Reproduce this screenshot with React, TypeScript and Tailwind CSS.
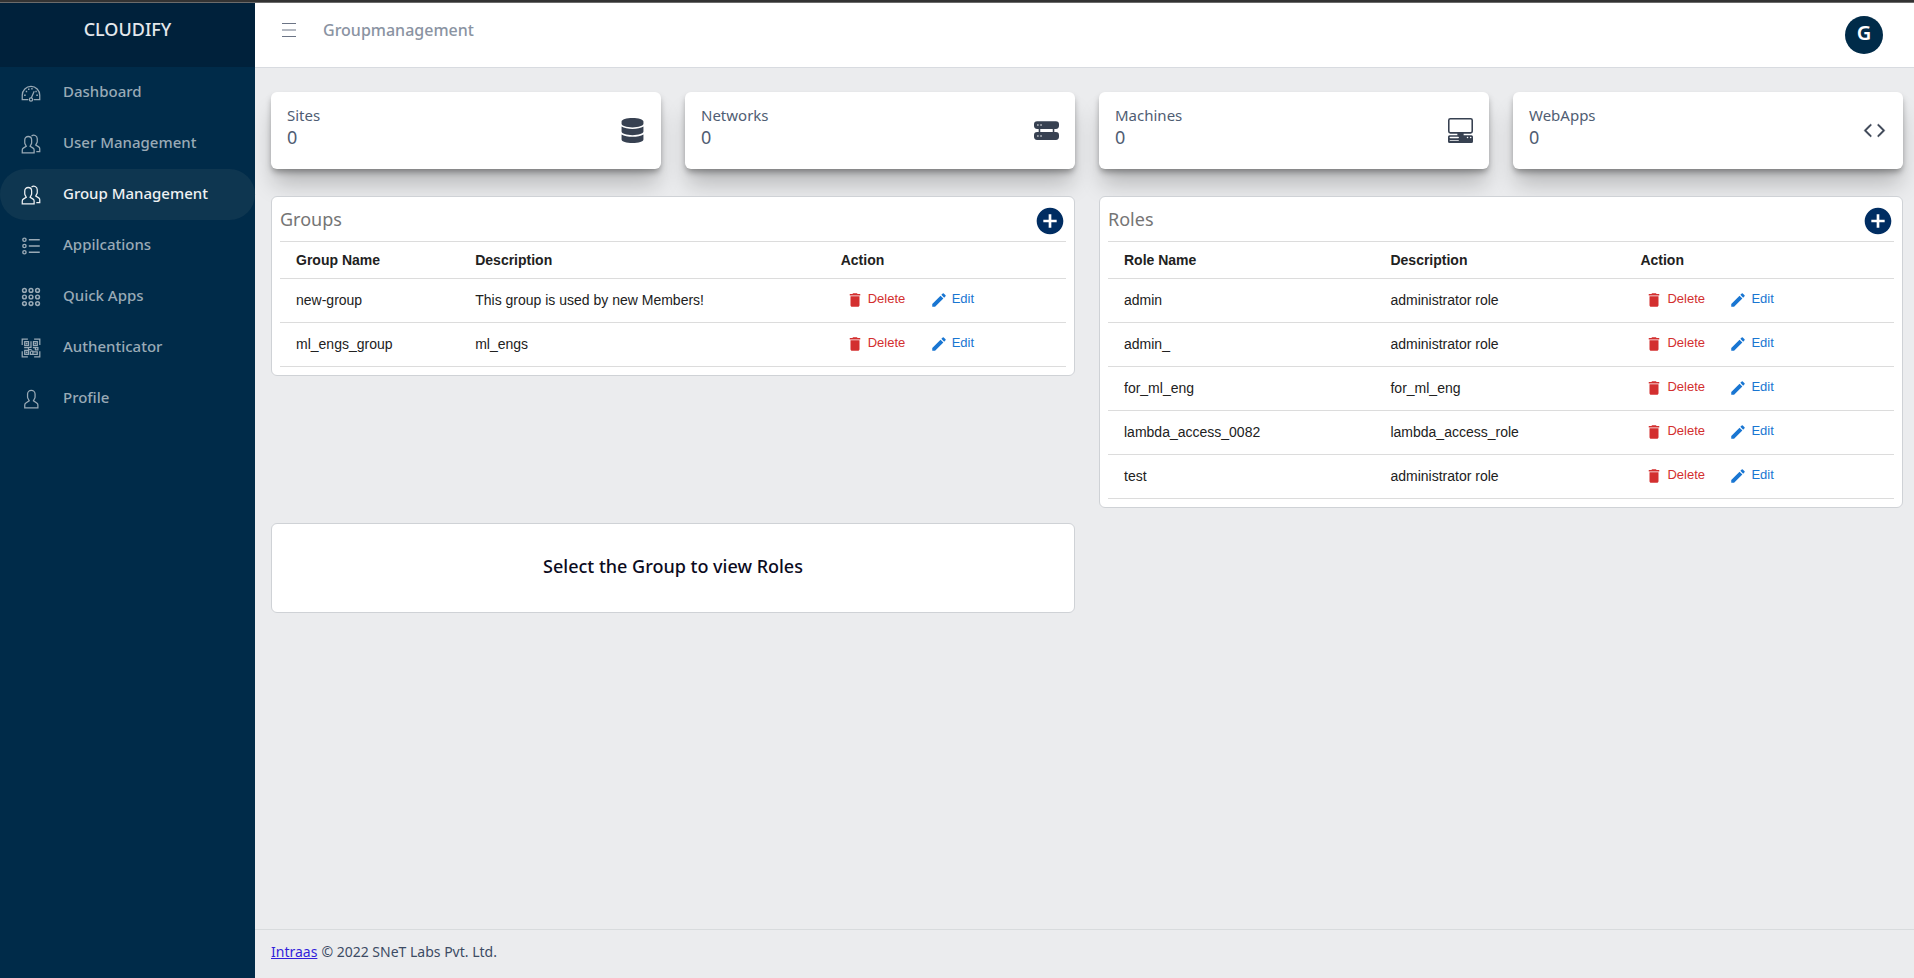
import type { ReactNode } from "react";
import { BsCode, BsHddRackFill, BsPcDisplayHorizontal } from "react-icons/bs";
import { FaDatabase } from "react-icons/fa";
import { MdAddCircle, MdDelete, MdEdit } from "react-icons/md";

function Icon({ children }: { children: ReactNode }) {
  return (
    <svg viewBox="0 0 512 512" className="size-5 shrink-0" fill="currentColor" aria-hidden="true">
      {children}
    </svg>
  );
}

function SpeedometerIcon() {
  return (
    <Icon>
      <path
        d="M186 425H32V312a224 224 0 0 1 448 0v113H326"
        fill="none"
        stroke="currentColor"
        strokeWidth="32"
      />
      <circle cx="256" cy="425" r="42" fill="none" stroke="currentColor" strokeWidth="32" />
      <path d="M262 386 338 214" stroke="currentColor" strokeWidth="32" />
      <path d="M80 296h40v34H80zM392 296h40v34h-40zM122 200h36v36h-36zM180 142h36v36h-36zM262 128h36v36h-36zM368 200h36v36h-36z" />
    </Icon>
  );
}

function PeopleIcon() {
  return (
    <Icon>
      <path d="M462.541,316.3l-64.344-42.1,24.774-45.418A79.124,79.124,0,0,0,432.093,192V120A103.941,103.941,0,0,0,257.484,43.523L279.232,67a71.989,71.989,0,0,1,120.861,53v72a46.809,46.809,0,0,1-5.215,21.452L355.962,284.8l89.058,58.274a42.16,42.16,0,0,1,19.073,35.421V432h-72v32h104V378.494A74.061,74.061,0,0,0,462.541,316.3Z" />
      <path d="M318.541,348.3l-64.343-42.1,24.773-45.418A79.124,79.124,0,0,0,288.093,224V152A104.212,104.212,0,0,0,184.04,47.866C126.723,47.866,80.093,94.581,80.093,152v72a78,78,0,0,0,9.015,36.775l24.908,45.664L50.047,348.3A74.022,74.022,0,0,0,16.5,410.4L16,496H352.093V410.494A74.061,74.061,0,0,0,318.541,348.3ZM320.093,464H48.186l.31-53.506a42.158,42.158,0,0,1,19.073-35.421l88.682-58.029L117.2,245.452A46.838,46.838,0,0,1,112.093,224V152a72,72,0,1,1,144,0v72a46.809,46.809,0,0,1-5.215,21.452L211.962,316.8l89.058,58.274a42.16,42.16,0,0,1,19.073,35.421Z" />
    </Icon>
  );
}

function ListIcon() {
  return (
    <Icon>
      <g fill="none" stroke="currentColor" strokeWidth="36">
        <circle cx="88" cy="96" r="42" />
        <circle cx="88" cy="256" r="42" />
        <circle cx="88" cy="416" r="42" />
        <path d="M200 96h280M200 256h280M200 416h280" />
      </g>
    </Icon>
  );
}

const DOTS = [88, 256, 424];

function AppsIcon() {
  return (
    <Icon>
      <g fill="none" stroke="currentColor" strokeWidth="38">
        {DOTS.map((y) => DOTS.map((x) => <circle key={`${x}-${y}`} cx={x} cy={y} r="48" />))}
      </g>
    </Icon>
  );
}

function QrCodeIcon() {
  return (
    <Icon>
      <g fill="none" stroke="currentColor" strokeWidth="32">
        <path d="M31 176V31h145M336 31h145v145M31 336v145h145M336 481h145V336" />
        <path d="M95 95h98v98H95zM319 95h98v98h-98zM95 319h98v98H95z" />
        <path d="M256 80v160h-48M80 248h112v48h80M304 248h128v56h-64v-40M240 336v80h176v-64h-96M256 336h48v80" />
      </g>
      <path d="M120 120h48v48h-48zM344 120h48v48h-48zM120 344h48v48h-48z" />
    </Icon>
  );
}

function UserIcon() {
  return (
    <Icon>
      <path d="M411.6,343.656l-72.823-47.334,27.455-50.334A80.23,80.23,0,0,0,376,207.681V128a112,112,0,0,0-224,0v79.681a80.236,80.236,0,0,0,9.768,38.308l27.455,50.333L116.4,343.656A79.725,79.725,0,0,0,80,410.732V496H448V410.732A79.727,79.727,0,0,0,411.6,343.656ZM416,464H112V410.732a47.836,47.836,0,0,1,21.841-40.246l97.66-63.479-41.64-76.341A48.146,48.146,0,0,1,184,207.681V128a80,80,0,0,1,160,0v79.681a48.146,48.146,0,0,1-5.861,22.985L296.5,307.007l97.662,63.479h0A47.836,47.836,0,0,1,416,410.732Z" />
    </Icon>
  );
}

const NAV = [
  { label: "Dashboard", icon: <SpeedometerIcon /> },
  { label: "User Management", icon: <PeopleIcon /> },
  { label: "Group Management", icon: <PeopleIcon />, active: true },
  { label: "Appilcations", icon: <ListIcon /> },
  { label: "Quick Apps", icon: <AppsIcon /> },
  { label: "Authenticator", icon: <QrCodeIcon /> },
  { label: "Profile", icon: <UserIcon /> },
];

const STATS = [
  { label: "Sites", value: 0, icon: <FaDatabase size={25} /> },
  { label: "Networks", value: 0, icon: <BsHddRackFill size={25} /> },
  { label: "Machines", value: 0, icon: <BsPcDisplayHorizontal size={25} /> },
  { label: "WebApps", value: 0, icon: <BsCode size={25} stroke="currentColor" strokeWidth={0.3} /> },
];

const GROUPS = [
  ["new-group", "This group is used by new Members!"],
  ["ml_engs_group", "ml_engs"],
];

const ROLES = [
  ["admin", "administrator role"],
  ["admin_", "administrator role"],
  ["for_ml_eng", "for_ml_eng"],
  ["lambda_access_0082", "lambda_access_role"],
  ["test", "administrator role"],
];

function Sidebar() {
  return (
    <aside className="flex w-[255px] shrink-0 flex-col bg-[#002b49]">
      <div className="h-16 bg-[#00213b] pt-3 text-center text-lg leading-7 font-medium text-[#e4e8ec]">
        CLOUDIFY
      </div>
      <nav aria-label="Main">
        <ul>
          {NAV.map(({ label, icon, active }) => (
            <li key={label}>
              <a
                href="#"
                aria-current={active ? "page" : undefined}
                className={`flex h-[51px] items-center gap-[22px] rounded-full pl-[21px] text-[15px] font-medium ${
                  active ? "bg-[#0e3650] text-[#eef1f3]" : "text-[#99aab6]"
                }`}
              >
                {icon}
                <span className="pb-0.5">{label}</span>
              </a>
            </li>
          ))}
        </ul>
      </nav>
    </aside>
  );
}

function Header() {
  return (
    <header className="flex h-[65px] items-center justify-between border-b border-[#d8dbe0] bg-white pr-[31px] pl-[27px]">
      <div className="flex items-center gap-[27px] self-start pt-[15px]">
        <button type="button" aria-label="Toggle sidebar" className="text-[#6b7485]">
          <svg viewBox="0 0 14 14" className="size-3.5" stroke="currentColor" aria-hidden="true">
            <path d="M0 .5h14M0 7h14M0 13.5h14" />
          </svg>
        </button>
        <h1 className="text-base leading-6 font-medium text-[#8a93a2]">Groupmanagement</h1>
      </div>
      <button
        type="button"
        className="size-[38px] rounded-full bg-[#002b49] pb-1 text-xl leading-none font-semibold text-white"
      >
        G
      </button>
    </header>
  );
}

function Panel({
  title,
  nameHeader,
  rows,
  nameCol,
  descCol,
}: {
  title: string;
  nameHeader: string;
  rows: string[][];
  nameCol: string;
  descCol: string;
}) {
  return (
    <section className="relative rounded-md border border-[#cfd2d6] bg-white px-2 pb-2">
      <div className="flex h-11 items-center justify-between">
        <h2 className="text-lg leading-6 text-[#757575]">{title}</h2>
        <button type="button" aria-label={`Add to ${title}`} className="pt-1 text-[#002d62]">
          <MdAddCircle size={32} />
        </button>
      </div>
      <table className="w-full table-fixed border-collapse text-left font-['Liberation_Sans',Arial,sans-serif] text-sm text-[#212121]">
        <colgroup>
          <col className={nameCol} />
          <col className={descCol} />
          <col />
        </colgroup>
        <thead>
          <tr className="h-[37px] border-y border-[#dcdcdc]">
            <th className="px-4 font-bold">{nameHeader}</th>
            <th className="px-4 font-bold">Description</th>
            <th className="px-4 font-bold">Action</th>
          </tr>
        </thead>
        <tbody>
          {rows.map(([name, description]) => (
            <tr key={name} className="h-11 border-b border-[#dcdcdc]">
              <td className="px-4 pb-0.5">{name}</td>
              <td className="px-4 pb-0.5">{description}</td>
              <td className="px-4 pb-0.5">
                <div className="flex text-[13px]">
                  <button type="button" className="flex w-[84px] items-center gap-1 pl-[5px] text-[#d32f2f]">
                    <MdDelete size={18} />
                    Delete
                  </button>
                  <button type="button" className="flex items-center gap-1 pl-[5px] text-[#1976d2]">
                    <MdEdit size={18} />
                    Edit
                  </button>
                </div>
              </td>
            </tr>
          ))}
        </tbody>
      </table>
    </section>
  );
}

export default function App() {
  return (
    <div className="flex min-h-screen flex-col bg-[#ebecee] font-['Noto_Sans',sans-serif]">
      <div className="h-[3px] border-b border-[#6b6b6b] bg-[#333333]" />
      <div className="flex flex-1">
        <Sidebar />
        <div className="flex min-w-0 flex-1 flex-col">
          <Header />
          <main className="flex-1 pt-6 pr-[11px] pl-4">
            <div className="grid grid-cols-4 gap-6">
              {STATS.map(({ label, value, icon }) => (
                <div
                  key={label}
                  className="flex h-[77px] items-center justify-between rounded-md bg-white px-4 shadow-[0_4px_6px_-1px_rgba(0,0,0,0.35),0_18px_22px_-3px_rgba(0,0,0,0.22)]"
                >
                  <div className="self-start pt-[11px] text-[#4f5d73]">
                    <div className="text-[15px] leading-6">{label}</div>
                    <div className="text-lg leading-5">{value}</div>
                  </div>
                  <span className="text-[#374151]">{icon}</span>
                </div>
              ))}
            </div>
            <div className="mt-[27px] grid grid-cols-2 items-start gap-x-6 gap-y-[15px]">
              <Panel title="Groups" nameHeader="Group Name" rows={GROUPS} nameCol="w-[22.8%]" descCol="w-[46.5%]" />
              <Panel title="Roles" nameHeader="Role Name" rows={ROLES} nameCol="w-[33.9%]" descCol="w-[31.8%]" />
              <section className="flex h-[90px] items-center justify-center rounded-md border border-[#cfd2d6] bg-white pb-1">
                <h2 className="text-lg font-medium text-[#0b0b1e]">Select the Group to view Roles</h2>
              </section>
            </div>
          </main>
          <footer className="flex h-[49px] items-center gap-1 border-t border-[#d8dbdd] pb-1 pl-4 text-sm text-[#3c4b64]">
            <a href="#" className="text-[#321fdb] underline">
              Intraas
            </a>
            <span>© 2022 SNeT Labs Pvt. Ltd.</span>
          </footer>
        </div>
      </div>
    </div>
  );
}
